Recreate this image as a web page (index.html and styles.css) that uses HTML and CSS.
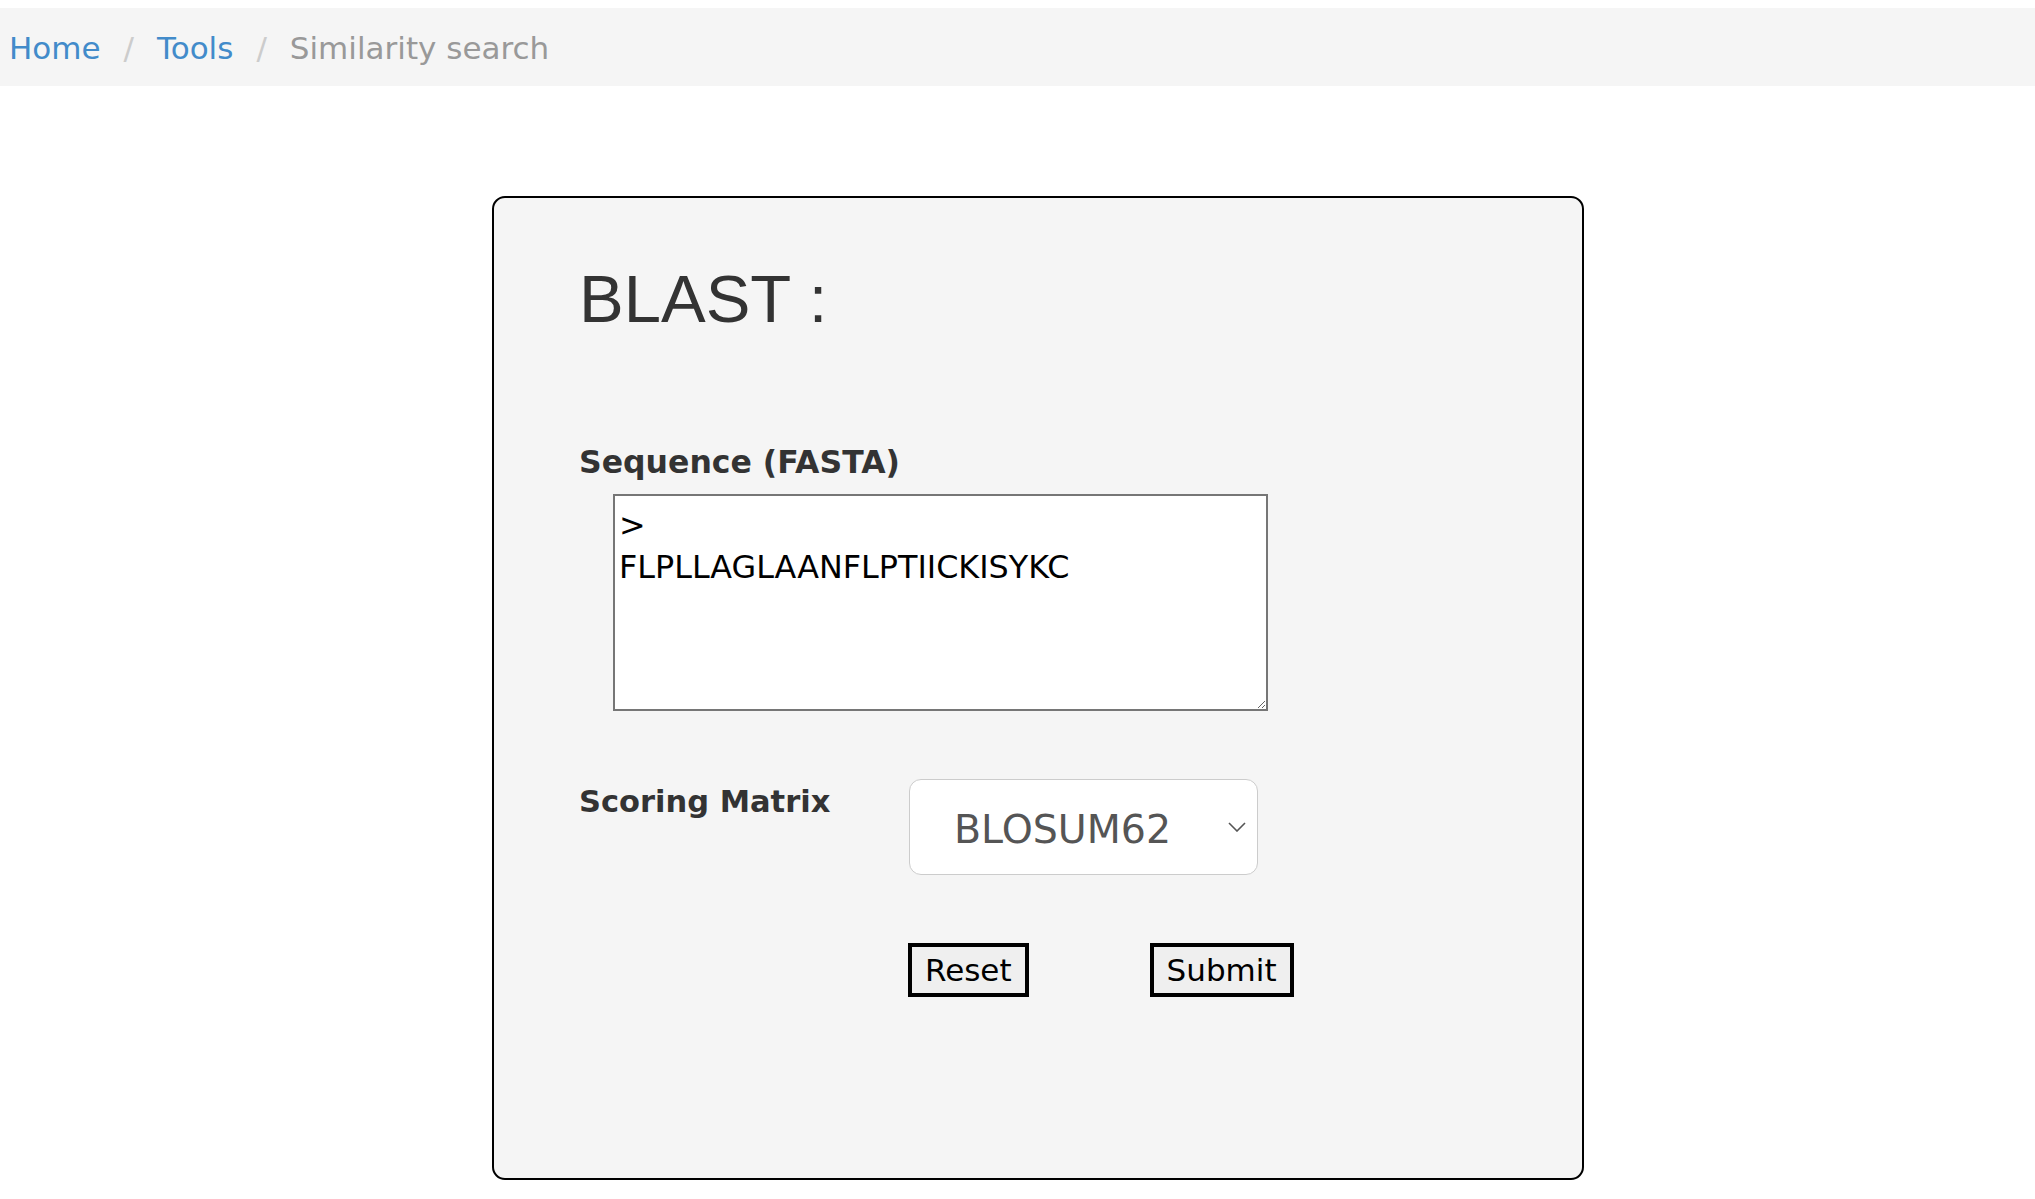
FILE: index.html
```html
<!DOCTYPE html>
<html lang="en">
<head>
<meta charset="utf-8">
<title>Similarity search</title>
<link rel="stylesheet" href="styles.css">
</head>
<body>
<nav class="breadcrumb">
  <a class="crumb-link" href="#">Home</a><span class="sep">/</span><a class="crumb-link" href="#">Tools</a><span class="sep">/</span><span class="crumb-active">Similarity search</span>
</nav>
<main class="card">
  <h1 class="title">BLAST :</h1>
  <form class="blast-form">
    <label class="field-label seq-label" for="seq">Sequence (FASTA)</label>
    <textarea id="seq" class="seq-input">&gt;
FLPLLAGLAANFLPTIICKISYKC</textarea>
    <div class="matrix-row">
      <label class="field-label matrix-label" for="matrix">Scoring Matrix</label>
      <span class="select-wrap">
        <select id="matrix" class="matrix-select">
          <option>BLOSUM62</option>
          <option>BLOSUM45</option>
          <option>BLOSUM80</option>
          <option>PAM30</option>
          <option>PAM70</option>
        </select>
        <svg class="chevron" width="18" height="10" viewBox="0 0 18 10" aria-hidden="true"><path d="M1 1 L9 9 L17 1" fill="none" stroke="#555" stroke-width="1.6"/></svg>
      </span>
    </div>
    <div class="actions">
      <button type="reset" class="btn">Reset</button>
      <button type="submit" class="btn">Submit</button>
    </div>
  </form>
</main>
</body>
</html>
```

FILE: styles.css
```css
html, body {
  margin: 0;
  padding: 0;
  background: #fff;
}

body {
  font-family: "DejaVu Sans", Verdana, sans-serif;
  color: #333;
}

.breadcrumb {
  margin-top: 8px;
  height: 78px;
  box-sizing: border-box;
  padding: 4px 0 0 9px;
  background: #f5f5f5;
  font-size: 31px;
  line-height: 73px;
  white-space: nowrap;
}

.crumb-link {
  color: #428bca;
  text-decoration: none;
}

.sep {
  display: inline-block;
  padding: 0 23px;
  color: #ccc;
}

.crumb-active {
  color: #999;
}

.card {
  box-sizing: border-box;
  width: 1092px;
  margin: 110px 0 0 492px;
  padding: 62px 0 181px 85px;
  background: #f5f5f5;
  border: 2px solid #000;
  border-radius: 13px;
}

.title {
  margin: 0;
  font-family: "Liberation Sans", Arial, Helvetica, sans-serif;
  font-weight: normal;
  font-size: 67px;
  line-height: 78px;
  color: #333;
}

.blast-form {
  margin: 0;
}

.field-label {
  display: block;
  font-weight: bold;
  color: #333;
  line-height: 36px;
}

.seq-label {
  margin-top: 106px;
  font-size: 31.5px;
}

.seq-input {
  display: block;
  box-sizing: border-box;
  width: 655px;
  height: 217px;
  margin: 14px 0 0 34px;
  padding: 8px 4px;
  border: 2px solid #767676;
  border-radius: 0;
  background: #fff;
  color: #000;
  font-family: "DejaVu Sans", Verdana, sans-serif;
  font-size: 31.8px;
  line-height: 42px;
}

.matrix-row {
  display: flex;
  align-items: flex-start;
  margin-top: 68px;
}

.matrix-label {
  width: 330px;
  margin-top: 5px;
  font-size: 30.5px;
}

.select-wrap {
  position: relative;
  display: inline-block;
}

.matrix-select {
  display: block;
  box-sizing: border-box;
  width: 349px;
  height: 96px;
  padding: 26px 0 22px 44px;
  border: 1px solid #ccc;
  border-radius: 12px;
  background: #fff;
  color: #555;
  font-family: "DejaVu Sans", Verdana, sans-serif;
  font-size: 39.5px;
  line-height: 46px;
  -webkit-appearance: none;
  appearance: none;
}

.chevron {
  position: absolute;
  top: 43px;
  right: 12px;
  pointer-events: none;
}

.actions {
  display: flex;
  gap: 121px;
  margin: 68px 0 0 329px;
}

.btn {
  box-sizing: border-box;
  height: 54px;
  padding: 0 13px;
  border: 4px solid #000;
  border-radius: 0;
  background: #efefef;
  color: #000;
  font-family: "DejaVu Sans", Verdana, sans-serif;
  font-size: 31px;
  line-height: 46px;
}
```
